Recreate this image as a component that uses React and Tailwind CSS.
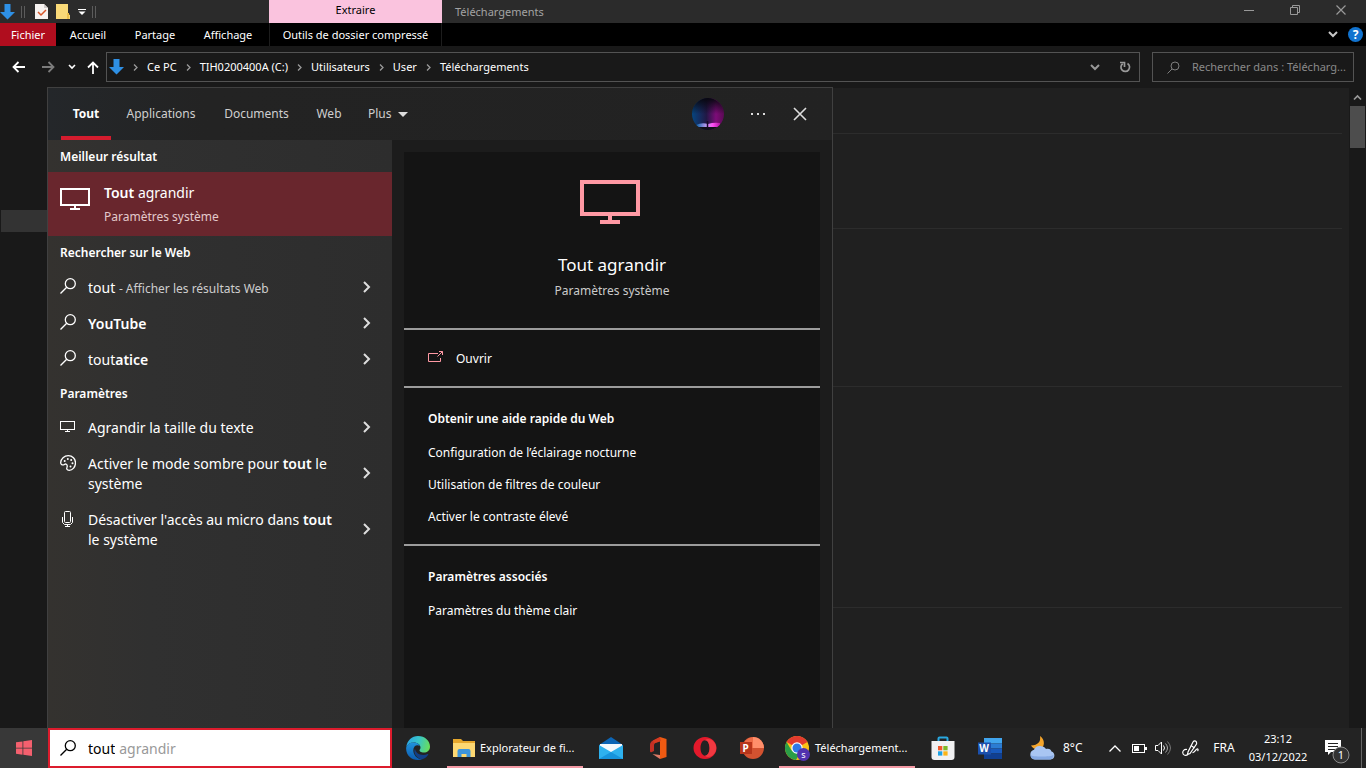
import React from "react";

const Svg = ({ w, h, vb, className = "", children, ...rest }) => (
  <svg
    width={w}
    height={h}
    viewBox={vb || `0 0 ${w} ${h}`}
    fill="none"
    aria-hidden="true"
    className={`shrink-0 ${className}`}
    {...rest}
  >
    {children}
  </svg>
);

const DownArrow = () => (
  <Svg w={15} h={16}>
    <path d="M4.5 0h6v8H15l-7.500 7.500L0 8h4.500z" fill="#2e90e5" />
  </Svg>
);

const SearchGlyph = ({ className = "" }) => (
  <Svg w={16} h={16} className={className}>
    <circle cx="10.300" cy="5.700" r="5" stroke="currentColor" strokeWidth="1.300" />
    <path d="M6.700 9.300 0.500 15.500" stroke="currentColor" strokeWidth="1.300" />
  </Svg>
);

const ChevronRight = () => (
  <Svg w={8} h={12}>
    <path d="m1 1 5 5-5 5" stroke="#dedede" strokeWidth="2" />
  </Svg>
);

const ChevronDown = ({ className = "" }) => (
  <Svg w={10} h={7} className={className}>
    <path d="m1 1 4 4 4-4" stroke="currentColor" strokeWidth="2" />
  </Svg>
);

const Crumb = ({ children }) => (
  <>
    <Svg w={5} h={7}>
      <path d="m1 0.500 3 3-3 3" stroke="#9a9a9a" strokeWidth="1.300" />
    </Svg>
    <a href="#chemin" className="whitespace-nowrap">{children}</a>
  </>
);

const Monitor = ({ size = "lg" }) =>
  size === "lg" ? (
    <Svg w={60} h={44} className="mr-1" shapeRendering="crispEdges">
      <path d="M2 2h56v32H2z" stroke="#ff99a4" strokeWidth="4" />
      <path d="M28 36h4v4h8v4H20v-4h8z" fill="#ff99a4" />
    </Svg>
  ) : (
    <Svg w={30} h={22} shapeRendering="crispEdges">
      <path d="M1 1h28v16H1z" stroke="#fff" strokeWidth="2" />
      <path d="M14 18h2v2h4v2H10v-2h4z" fill="#fff" />
    </Svg>
  );

const MonitorSmall = () => (
  <Svg w={16} h={16} shapeRendering="crispEdges">
    <path d="M0.500 3.500h14v8h-14z" stroke="#fff" />
    <path d="M7 12h1v1h2v1H5v-1h2z" fill="#fff" />
  </Svg>
);

const Palette = () => (
  <Svg w={16} h={16}>
    <path
      d="M.7 7.500C.9 3.700 4.200.7 8.300.7s7.200 3.100 7.200 7.100c0 4.300-2.900 7.500-6.300 7.500-2.600 0-2.800-1.700-2.200-3.100.5-1.300.2-2.300-.7-3-.9-.7-1.700.2-2.600.6C2 10.300.6 9.300.7 7.500z"
      stroke="#fff"
      strokeWidth="1.300"
    />
    <g fill="#fff">
      <circle cx="4.700" cy="6" r="1" />
      <circle cx="7.800" cy="4" r="1" />
      <circle cx="11.200" cy="5" r="1" />
      <circle cx="12.500" cy="8.300" r="1" />
      <circle cx="10.500" cy="11.500" r="1" />
    </g>
  </Svg>
);

const Mic = () => (
  <Svg w={16} h={16}>
    <rect x="4.500" y="0.500" width="6" height="11" rx="1" stroke="#fff" />
    <path d="M2.500 6v5.500l2 2h6l2-2V6M7.500 13.500v2M5 15.500h5" stroke="#fff" />
  </Svg>
);

const ResultRow = ({ icon, children, tall }) => (
  <li>
    <a
      href="#resultat"
      className={`flex items-center pr-5 pl-3 ${tall ? "h-14" : "h-9"}`}
    >
      <span className={`flex w-7 shrink-0 ${tall ? "h-14 items-start pt-2.5" : "items-center pb-0.5"}`}>
        {icon}
      </span>
      <span className="w-[252px] shrink-0 pt-0.5 text-sm leading-5">{children}</span>
      <span className="ml-auto pr-px">
        <ChevronRight />
      </span>
    </a>
  </li>
);

const SectionTitle = ({ children }) => (
  <h2 className="flex h-8 items-center pt-0.5 pl-3 text-xs font-semibold">{children}</h2>
);

function ExplorerChrome() {
  return (
    <header className="shrink-0">
      <div className="flex h-[23px] bg-[#2b2b2b] text-[11px]">
        <div className="flex w-[269px] shrink-0 items-center">
          <DownArrow />
          <span className="ml-1.5 h-3 w-[4px] border-x border-[#5c5c5c]" />
          <Svg w={13} h={15} className="ml-2.5">
            <path d="M0 0h9l4 4v11H0z" fill="#f6f2f0" />
            <path d="m3 8 3 3 5-5" stroke="#d8572a" strokeWidth="1.500" />
            <path d="M9 0v4h4" fill="#cfcac8" />
          </Svg>
          <Svg w={14} h={15} className="ml-2">
            <path d="M0 0h12v10l2 1v4H0z" fill="#f9d978" />
            <path d="M11 9h2v6h-2z" fill="#ecc04c" />
          </Svg>
          <Svg w={8} h={6} className="ml-2">
            <path d="M0 0.500h8" stroke="#fff" />
            <path d="M0.500 2.500h7L4 6z" fill="#fff" />
          </Svg>
          <span className="ml-1.5 h-3 w-[4px] border-x border-[#5c5c5c]" />
        </div>
        <div className="flex w-[173px] shrink-0 items-center justify-center bg-[#fac3de] pb-0.5 text-black">
          Extraire
        </div>
        <h1 className="flex items-center pt-0.5 pl-[13px] text-[#a3a3a3]">Téléchargements</h1>
        <div className="mr-0.5 ml-auto flex items-center pb-1 text-[#999]">
          <button aria-label="Réduire" className="flex w-[46px] justify-center">
            <Svg w={10} h={10}>
              <path d="M0 5.500h10" stroke="currentColor" />
            </Svg>
          </button>
          <button aria-label="Restaurer" className="flex w-[46px] justify-center">
            <Svg w={10} h={10}>
              <path d="M0.500 2.500h7v7h-7zM2.500 2.500v-2h7v7h-2" stroke="currentColor" />
            </Svg>
          </button>
          <button aria-label="Fermer la fenêtre" className="flex w-[46px] justify-center">
            <Svg w={10} h={10}>
              <path d="m0.500 0.500 9 9m0-9-9 9" stroke="currentColor" strokeWidth="1.200" />
            </Svg>
          </button>
        </div>
      </div>

      <nav aria-label="Ruban" className="flex h-[23px] items-center bg-black text-[11px]">
        <button className="h-full w-14 bg-[#b00d1e] pt-0.5">Fichier</button>
        <button className="w-16 pt-0.5">Accueil</button>
        <button className="w-[70px] pt-0.5">Partage</button>
        <button className="w-[76px] pt-0.5">Affichage</button>
        <span className="w-[3px]" />
        <button className="h-full w-[173px] border-x border-[#1d1d1d] pt-0.5">
          Outils de dossier compressé
        </button>
        <button aria-label="Développer le ruban" className="ml-auto text-[#c8c8c8]">
          <ChevronDown />
        </button>
        <button
          aria-label="Aide"
          className="ml-2.5 mr-[3px] size-[15px] rounded-full bg-[#1173cf] text-xs leading-[15px] font-bold"
        >
          ?
        </button>
      </nav>

      <div className="flex h-[42px] items-center bg-[#191919] pr-3 pl-3 text-[11px]">
        <button aria-label="Précédent" className="w-[14px]">
          <Svg w={13} h={12}>
            <path d="M13 6H1.500M6.500 1l-5 5 5 5" stroke="#fff" strokeWidth="1.800" />
          </Svg>
        </button>
        <button aria-label="Suivant" className="ml-4 w-[14px]">
          <Svg w={13} h={12}>
            <path d="M0 6h11.500M6.500 1l5 5-5 5" stroke="#7c7c7c" strokeWidth="1.800" />
          </Svg>
        </button>
        <button aria-label="Emplacements récents" className="ml-3">
          <Svg w={8} h={6}>
            <path d="m1 1 3 3 3-3" stroke="#fff" strokeWidth="1.600" />
          </Svg>
        </button>
        <button aria-label="Dossier parent" className="ml-[11px]">
          <Svg w={12} h={13}>
            <path d="M6 13V1.500M1 6.500l5-5 5 5" stroke="#fff" strokeWidth="1.800" />
          </Svg>
        </button>
        <nav
          aria-label="Chemin"
          className="ml-[7px] flex h-[30px] min-w-0 flex-1 items-center gap-[9px] border border-[#535353] pl-0.5"
        >
          <DownArrow />
          <Crumb>Ce PC</Crumb>
          <Crumb>TIH0200400A (C:)</Crumb>
          <Crumb>Utilisateurs</Crumb>
          <Crumb>User</Crumb>
          <Crumb>Téléchargements</Crumb>
          <button aria-label="Historique" className="ml-auto text-[#999]">
            <ChevronDown />
          </button>
          <button aria-label="Actualiser" className="mr-2 ml-2.5 text-[#999]">
            <Svg w={12} h={12}>
              <path d="M8.500 2.500a4.300 4.300 0 1 1-4.800.2" stroke="currentColor" strokeWidth="1.700" />
              <path d="M1 1.500h4.500V6" stroke="currentColor" strokeWidth="1.700" />
            </Svg>
          </button>
        </nav>
        <label className="ml-3 flex h-[30px] w-[202px] shrink-0 items-center border border-[#535353] pl-3.5 text-[#7e7e7e]">
          <Svg w={13} h={13}>
            <circle cx="8" cy="5" r="4" stroke="currentColor" />
            <path d="M5 8 0.500 12.500" stroke="currentColor" />
          </Svg>
          <input
            type="text"
            aria-label="Rechercher dans Téléchargements"
            placeholder="Rechercher dans : Télécharg..."
            className="ml-3 w-0 flex-1 bg-transparent outline-none placeholder:text-[#8a8a8a]"
          />
        </label>
      </div>
    </header>
  );
}

function SearchPanel() {
  return (
    <section
      aria-label="Recherche Windows"
      className="absolute -top-px bottom-0 left-[47px] flex w-[786px] max-w-full flex-col border-x border-t border-[#404040] bg-[#1c1c1c]"
    >
      <div className="flex h-[52px] shrink-0 items-center bg-linear-to-r from-[#24272a] via-[#232323] via-20% to-[#222] pl-[13px] text-xs text-[#cfcfcf]">
        <button className="h-full w-[50px] border-b-4 border-[#d41c2e] pt-1 font-bold text-white">
          Tout
        </button>
        <button className="ml-0.5 w-24">Applications</button>
        <button className="ml-0.5 w-[91px]">Documents</button>
        <button className="ml-0.5 w-[50px]">Web</button>
        <button className="ml-0.5 flex items-center gap-1.5 px-3">
          Plus
          <Svg w={10} h={5}>
            <path d="M0 0h10L5 5z" fill="#dcdcdc" />
          </Svg>
        </button>
        <button aria-label="Compte" className="ml-auto">
          <Svg w={32} h={32}>
            <defs>
              <linearGradient id="sky" x1="0" x2="1" y1="0" y2="0">
                <stop offset="0" stopColor="#06457f" />
                <stop offset="0.450" stopColor="#211845" />
                <stop offset="0.750" stopColor="#7d0c78" />
                <stop offset="1" stopColor="#5a0a54" />
              </linearGradient>
              <linearGradient id="night" x1="0" x2="0" y1="0" y2="1">
                <stop offset="0" stopColor="#07070f" />
                <stop offset="0.500" stopColor="#07070f" stopOpacity="0" />
              </linearGradient>
              <linearGradient id="glow" x1="0" x2="1" y1="0" y2="0">
                <stop offset="0" stopColor="#0865a8" />
                <stop offset="0.450" stopColor="#c29af2" />
                <stop offset="0.700" stopColor="#ff4df4" />
                <stop offset="1" stopColor="#b012a0" />
              </linearGradient>
              <clipPath id="disc">
                <circle cx="16" cy="16" r="16" />
              </clipPath>
            </defs>
            <g clipPath="url(#disc)">
              <path d="M0 0h32v32H0z" fill="url(#sky)" />
              <path d="M0 0h32v32H0z" fill="url(#night)" />
              <path d="M4 27q6-3 12-1 6-2 12-1v4H4z" fill="url(#glow)" />
              <path d="M0 29h32v3H0z" fill="#101018" />
              <path d="M15.500 23v7" stroke="#180a28" strokeWidth="1.500" />
            </g>
          </Svg>
        </button>
        <button aria-label="Options" className="ml-[27px]">
          <Svg w={14} h={2}>
            <path d="M0 0h2v2H0zM6 0h2v2H6zM12 0h2v2h-2z" fill="#ddd" />
          </Svg>
        </button>
        <button aria-label="Fermer la recherche" className="mr-[25px] ml-7">
          <Svg w={14} h={14}>
            <path d="m1 1 12 12m0-12L1 13" stroke="#ddd" strokeWidth="1.600" />
          </Svg>
        </button>
      </div>

      <div className="flex min-h-0 flex-1">
        <div className="w-[344px] shrink-0 bg-linear-to-r from-[#34322f] via-[#303030] via-30% to-[#2d2d2d] text-white">
          <SectionTitle>Meilleur résultat</SectionTitle>
          <a href="#agrandir" className="flex h-16 bg-[#69262d] pl-3">
            <span className="w-11 shrink-0 pt-4">
              <Monitor size="sm" />
            </span>
            <span className="flex flex-col pt-[9px]">
              <span className="text-sm leading-6">
                <b className="font-semibold">Tout</b> agrandir
              </span>
              <span className="text-xs leading-6 text-[#e3c9cb]">Paramètres système</span>
            </span>
          </a>
          <SectionTitle>Rechercher sur le Web</SectionTitle>
          <ul className="pt-px">
            <ResultRow icon={<SearchGlyph />}>
              tout <span className="text-xs text-[#cecece]">- Afficher les résultats Web</span>
            </ResultRow>
            <ResultRow icon={<SearchGlyph />}>
              <b className="font-semibold">YouTube</b>
            </ResultRow>
            <ResultRow icon={<SearchGlyph />}>
              tout<b className="font-semibold">atice</b>
            </ResultRow>
          </ul>
          <SectionTitle>Paramètres</SectionTitle>
          <ul>
            <ResultRow icon={<MonitorSmall />}>Agrandir la taille du texte</ResultRow>
            <ResultRow tall icon={<Palette />}>
              <span className="block">
                Activer le mode sombre pour <b className="font-semibold">tout</b> le
              </span>
              <span className="block">système</span>
            </ResultRow>
            <ResultRow tall icon={<Mic />}>
              <span className="block">
                Désactiver l'accès au micro dans <b className="font-semibold">tout</b>
              </span>
              <span className="block">le système</span>
            </ResultRow>
          </ul>
        </div>

        <div className="flex flex-1 px-3 pt-3">
          <article className="flex-1 bg-[#141414] text-xs text-white">
            <div className="flex h-44 flex-col items-center pt-7">
              <Monitor />
              <h2 className="mt-[29px] text-[17px] leading-6">Tout agrandir</h2>
              <p className="mt-1 leading-5 text-[#cbcbcb]">Paramètres système</p>
            </div>
            <div className="border-y-2 border-[#9c9c9c]">
              <a href="#ouvrir" className="flex h-14 items-center gap-3 px-6 pt-0.5">
                <Svg w={16} h={16}>
                  <path d="M10 2.500H0.500v8h12V7" stroke="#ff99a4" />
                  <path d="m9.500 5.500 5-5M11 0.500h3.500V4" stroke="#ff99a4" />
                </Svg>
                Ouvrir
              </a>
            </div>
            <div className="border-b-2 border-[#9c9c9c] px-6 pt-[15px] pb-[11px]">
              <h3 className="flex h-8 items-center font-semibold">Obtenir une aide rapide du Web</h3>
              <ul className="pt-0.5">
                {[
                  "Configuration de l’éclairage nocturne",
                  "Utilisation de filtres de couleur",
                  "Activer le contraste élevé",
                ].map((t) => (
                  <li key={t}>
                    <a href="#aide" className="flex h-8 items-center">{t}</a>
                  </li>
                ))}
              </ul>
            </div>
            <div className="px-6 pt-[15px]">
              <h3 className="flex h-8 items-center font-semibold">Paramètres associés</h3>
              <a href="#theme" className="mt-0.5 flex h-8 items-center">Paramètres du thème clair</a>
            </div>
          </article>
        </div>
      </div>
    </section>
  );
}

function FileArea() {
  return (
    <main className="relative flex min-h-0 flex-1 bg-[#202020]">
      <aside className="w-12 shrink-0 bg-[#191919] pt-[122px]">
        <div className="ml-px h-[22px] bg-[#333]" />
      </aside>
      <div className="flex-1 pr-[7px]">
        <div className="h-[46px] border-b border-[#2c2c2c]" />
        <div className="h-[95px] border-b border-[#2c2c2c]" />
        <div className="h-[158px] border-b border-[#2c2c2c]" />
        <div className="h-[221px] border-b border-[#2c2c2c]" />
      </div>
      <div className="flex w-[17px] flex-col items-center bg-[#191919] pt-1.5">
        <Svg w={9} h={7}>
          <path d="m1 5.500 3.500-3.500L8 5.500" stroke="#9a9a9a" strokeWidth="1.700" />
        </Svg>
        <div className="mt-[5px] h-[42px] w-[15px] bg-[#4d4d4d]" />
      </div>
      <SearchPanel />
    </main>
  );
}

const AppButton = ({ label, children, wide }) => (
  <button
    aria-label={label}
    className={`flex h-full shrink-0 items-center justify-center ${wide ? "w-[51px]" : "w-[47px]"}`}
  >
    {children}
  </button>
);

const OpenApp = ({ icon, children }) => (
  <button className="h-full w-36 shrink-0 px-1">
    <span className="flex h-full items-center gap-[5px] border-b-2 border-[#f49aa5] pt-0.5 pl-1.5 text-[11px]">
      {icon}
      <span className="whitespace-nowrap">{children}</span>
    </span>
  </button>
);

function Taskbar() {
  return (
    <footer className="flex h-10 shrink-0 items-stretch bg-[#232323] text-white">
      <button aria-label="Démarrer" className="flex w-12 shrink-0 items-center justify-center bg-[#383838]">
        <Svg w={16} h={16}>
          <path
            d="M0 2.300 6.500 1.400v6.300H0zM7.300 1.300 16 0v7.700H7.300zM0 8.500h6.500v6.200L0 13.800zM7.300 8.500H16V16l-8.700-1.200z"
            fill="#f4606e"
          />
        </Svg>
      </button>
      <label className="flex w-[344px] shrink-0 items-center border-2 border-[#dc1c2d] bg-white pl-2.5 text-sm text-black">
        <SearchGlyph />
        <input
          aria-label="Rechercher"
          defaultValue="tout"
          className="ml-3 field-sizing-content pt-0.5 outline-none"
        />
        <span className="ml-1 pt-0.5 text-[#999]">agrandir</span>
      </label>

      <AppButton label="Microsoft Edge" wide>
        <Svg w={24} h={24}>
          <defs>
            <linearGradient id="edgeTop" x1="0" x2="1" y1="0.300" y2="0.500">
              <stop offset="0" stopColor="#2ba6e6" />
              <stop offset="0.500" stopColor="#38c5c8" />
              <stop offset="1" stopColor="#68dd5c" />
            </linearGradient>
            <linearGradient id="edgeLow" x1="0" x2="0" y1="0" y2="1">
              <stop offset="0" stopColor="#2093dc" />
              <stop offset="1" stopColor="#0c5bb0" />
            </linearGradient>
          </defs>
          <path d="M0.300 11C1 4.500 6 0 12 0c7 0 12 5 12 10.500 0 4-3 6-6 6-3.500 0-4.500-1.500-4.500-2.300 0-.7 1-1.200 1-2.700 0-2.500-2.800-5-6.700-5C4 6.500 1.500 8.500.3 11z" fill="url(#edgeTop)" />
          <path d="M0.200 11.500C1 8.500 4 6.500 7.800 6.500c3.500 0 5.500 2 6 3.500-3-2-6.500.2-6.500 4.200 0 4.500 3.500 9 9 9.100C15 23.800 13.500 24 12 24 5 24-.5 18.500.2 11.500z" fill="url(#edgeLow)" />
          <path d="M9 12.500c-2.500 5 2.500 10.300 7.300 10.800 2.500-.7 5-2.700 6-4.800.3-.5-.2-.8-.6-.5-6 2.500-12.200-.2-12.700-5.500z" fill="#123f86" />
        </Svg>
      </AppButton>
      <OpenApp
        icon={
          <Svg w={22} h={18}>
            <path d="M0 0h8l2 2h12v16H0z" fill="#e6a72c" />
            <path d="M0 4h22v14H0z" fill="#fdd872" />
            <path d="M4.500 18v-6q0-2 2-2h9q2 0 2 2v6h-4v-3h-5v3z" fill="#3d95dc" />
          </Svg>
        }
      >
        Explorateur de fi...
      </OpenApp>
      <AppButton label="Courrier">
        <Svg w={24} h={22}>
          <path d="M0 8 12 0l12 8v14H0z" fill="#0c65b5" />
          <path d="M1 7h22v10H1z" fill="#f4f9fd" />
          <path d="M0 8 12 15 24 8v14H0z" fill="#2eb1ee" />
          <path d="M12 15 24 22H0z" fill="#1794dc" />
        </Svg>
      </AppButton>
      <AppButton label="Office">
        <Svg w={18} h={22}>
          <path d="M11 0 17.500 2v18L11 22z" fill="#ee5a12" />
          <path d="M11 0 4 3.500Q1 5 1 8v6q0 2 2 1l2-1V8q0-2 2-2.500L11.500 4z" fill="#c33025" />
          <path d="M3.500 17 11 18v4z" fill="#df7a66" />
          <path d="M11 0v4.500L5 6.500 4 3.500z" fill="#d53b21" />
        </Svg>
      </AppButton>
      <AppButton label="Opera">
        <Svg w={24} h={22}>
          <path
            fillRule="evenodd"
            d="M12 0c6.500 0 11.500 5 11.500 11S18.500 22 12 22 .5 17 .5 11 5.500 0 12 0zm0 3.300C9.300 3.300 7.500 6.800 7.500 11s1.800 7.700 4.500 7.700 4.500-3.500 4.500-7.700S14.700 3.300 12 3.300z"
            fill="#e3192b"
          />
          <path d="M12 3.300c2-2.300 6-1.500 7.500.3 5 4 5 11 0 15-2 1.500-5.500 2-7.500.1 2.700 0 4.500-3.500 4.500-7.700S14.700 3.300 12 3.300z" fill="#f6474b" opacity="0.700" />
        </Svg>
      </AppButton>
      <AppButton label="PowerPoint">
        <span className="relative flex">
          <Svg w={24} h={22}>
            <circle cx="13" cy="11" r="11" fill="#d35230" />
            <path d="M13 0a11 11 0 0 1 11 11H13z" fill="#ff8f6b" />
            <path d="M13 0v11H2.500A11 11 0 0 1 13 0z" fill="#ed6c47" />
            <path d="M0 5h12v12H0z" fill="#b7351b" />
          </Svg>
          <span className="absolute top-[5px] left-0 w-3 text-center text-[10px] leading-3 font-bold">P</span>
        </span>
      </AppButton>
      <OpenApp
        icon={
          <span className="relative flex">
            <Svg w={25} h={25}>
              <circle cx="12" cy="12" r="12" fill="#fbc116" />
              <path d="M12 12 1.600 6A12 12 0 0 1 22.400 6z" fill="#e33b2e" />
              <path d="M1.600 6A12 12 0 0 0 11 24l5.500-9.500L12 12 6.500 14.500z" fill="#2a9e47" />
              <circle cx="12" cy="12" r="5.700" fill="#fff" />
              <circle cx="12" cy="12" r="4.500" fill="#3079e8" />
              <circle cx="18.500" cy="18.500" r="6.500" fill="#5132ae" />
            </Svg>
            <span className="absolute right-0 bottom-0 w-[13px] text-center text-[9px] leading-[13px]">s</span>
          </span>
        }
      >
        Téléchargement...
      </OpenApp>
      <AppButton label="Microsoft Store">
        <Svg w={24} h={24}>
          <path d="M7.500 6V2.500q0-1 1-1h7q1 0 1 1V6" stroke="#29a8e0" strokeWidth="2" />
          <path d="M0.500 5h23v16q0 3-3 3h-17q-3 0-3-3z" fill="#f1f1f2" />
          <path d="M7 10h4.300v4.300H7z" fill="#f0562b" />
          <path d="M12.300 10h4.300v4.300h-4.300z" fill="#7db928" />
          <path d="M7 15.300h4.300v4.300H7z" fill="#1ba2e6" />
          <path d="M12.300 15.300h4.300v4.300h-4.300z" fill="#fbb416" />
        </Svg>
      </AppButton>
      <AppButton label="Word">
        <span className="relative flex">
          <Svg w={24} h={21}>
            <path d="M6 0h18v5.500H6z" fill="#41a5ee" />
            <path d="M6 5.500h18v5H6z" fill="#2b7cd3" />
            <path d="M6 10.500h18v5H6z" fill="#185abd" />
            <path d="M6 15.500h18V21H6z" fill="#103f91" />
            <path d="M0 4.500h13v12H0z" fill="#1b50ad" />
          </Svg>
          <span className="absolute top-1 left-0 w-[13px] text-center text-[10px] leading-3 font-bold">W</span>
        </span>
      </AppButton>

      <div className="ml-auto flex items-center text-[11px]">
        <button className="flex h-full w-[74px] items-center gap-2 text-xs whitespace-nowrap">
          <Svg w={26} h={24}>
            <path d="M11 0c1 6-2 9-9 9.500C4 13 8 14.500 13 12c3-3 2.500-9-2-12z" fill="#f5a52b" />
            <path d="M6 23.500a5 5 0 0 1-1-9.800c1-3 3.500-4.200 6.500-3.700 3 .3 4.500 1.500 5.500 3 3-1 5 .5 5.500 2.500 4 1 4 8-1 8z" fill="#a9c5f2" />
            <path d="M1.500 19c2 2 20 2 23 0 0 2.500-1.500 4.500-4 4.500H6c-2.500 0-4.500-2-4.500-4.500z" fill="#86a9e3" />
          </Svg>
          8°C
        </button>
        <button aria-label="Icônes cachées" className="flex w-6 justify-center">
          <Svg w={12} h={7}>
            <path d="m0.500 6.500 5.500-5.500 5.500 5.500" stroke="#fff" strokeWidth="1.300" />
          </Svg>
        </button>
        <button aria-label="Batterie" className="flex w-6 justify-center">
          <Svg w={15} h={9} shapeRendering="crispEdges">
            <path d="M0.500 0.500h12v8h-12z" stroke="#fff" />
            <path d="M2 2h5v5H2zM13 3h2v3h-2z" fill="#fff" />
          </Svg>
        </button>
        <button aria-label="Volume" className="flex w-6 justify-center">
          <Svg w={17} h={14}>
            <path d="M0.500 4.500h2.500l3.500-3.500v12L3 9.500H.5z" stroke="#fff" />
            <path d="M8.500 4.500q2 2.500 0 5" stroke="#fff" />
            <path d="M10.500 2.500q4 4.500 0 9" stroke="#aaa" />
            <path d="M12.500 0.500q6 6.500 0 13" stroke="#777" />
          </Svg>
        </button>
        <button aria-label="Espace Windows Ink" className="flex w-[30px] justify-center">
          <Svg w={17} h={17}>
            <path d="M6 12 5.500 14.500 8 13.500 14.500 4q.5-2-1-3-1.500-.5-2.500 1z" stroke="#fff" strokeWidth="1.200" />
            <path d="M9 5.500 12.500 8M5 9.500C2 9 .5 11 .8 13c.3 2.500 3.200 3 5 1.500M10.500 12.500c2 .5 3-3 4.500-3.500 1-.3 1.500 1 .5 2" stroke="#fff" strokeWidth="1.200" />
          </Svg>
        </button>
        <button className="w-[38px] text-xs">FRA</button>
        <button className="w-[70px] leading-[18px] whitespace-nowrap">
          <time className="block">23:12</time>
          <time className="block">03/12/2022</time>
        </button>
        <button aria-label="Notifications" className="flex w-12 justify-center">
          <span className="relative flex">
            <Svg w={26} h={32}>
              <path d="M1 8h16v12H7l-3 3v-3H1z" fill="#fff" />
              <path d="M4 11.500h10M4 14.500h10M4 17.500h7" stroke="#232323" />
              <circle cx="17" cy="23" r="8" fill="#333" stroke="#8c8c8c" />
            </Svg>
            <span className="absolute right-px bottom-px w-4 text-center text-[11px] leading-4">1</span>
          </span>
        </button>
        <span className="h-full w-[5px] border-l border-[#666]" />
      </div>
    </footer>
  );
}

export default function App() {
  return (
    <div className="flex h-screen flex-col overflow-hidden bg-[#191919] font-['Noto_Sans','Open_Sans',sans-serif] text-white">
      <ExplorerChrome />
      <FileArea />
      <Taskbar />
    </div>
  );
}
